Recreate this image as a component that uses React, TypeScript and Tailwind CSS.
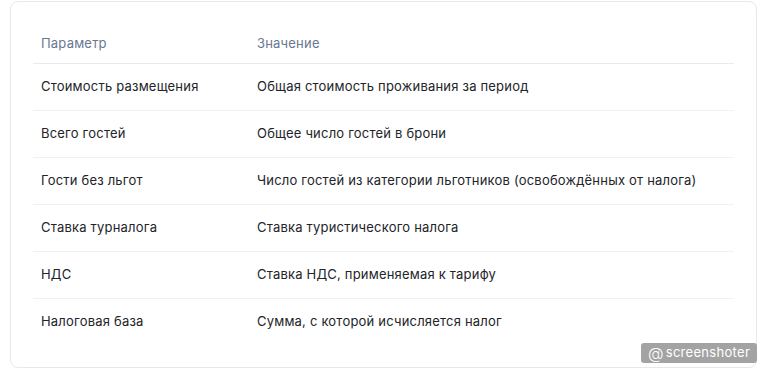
const rows: [string, string][] = [
  ["Стоимость размещения", "Общая стоимость проживания за период"],
  ["Всего гостей", "Общее число гостей в брони"],
  ["Гости без льгот", "Число гостей из категории льготников (освобождённых от налога)"],
  ["Ставка турналога", "Ставка туристического налога"],
  ["НДС", "Ставка НДС, применяемая к тарифу"],
  ["Налоговая база", "Сумма, с которой исчисляется налог"],
];

export default function App() {
  return (
    <div className="w-[763px] h-[370px] bg-white pt-px pl-[10px] relative" style={{ fontFamily: "Inter, 'Noto Sans', sans-serif" }}>
      <div className="w-[747px] h-[367px] border border-[#e5e8ee] rounded-lg px-[22px] pt-[22px] bg-white">
        <table className="w-full border-collapse text-[13px] tracking-[0.2px]">
          <thead>
            <tr className="border-b border-[#e6ebf2]">
              <th className="w-[216px] h-[39px] px-2 text-left font-normal text-[#687891]">Параметр</th>
              <th className="h-[39px] px-2 text-left font-normal text-[#687891]">Значение</th>
            </tr>
          </thead>
          <tbody>
            {rows.map(([k, v], i) => (
              <tr key={k} className={i < rows.length - 1 ? "border-b border-[#eef1f6]" : ""}>
                <td className="h-[47px] px-2 text-[#222428]">{k}</td>
                <td className="h-[47px] px-2 text-[#222428]">{v}</td>
              </tr>
            ))}
          </tbody>
        </table>
      </div>
      <div className="absolute left-[641px] top-[343px] w-[116px] h-[20px] rounded-[3px] bg-[#a3a3a3] text-white text-[13px] tracking-[0.3px] flex items-center justify-center gap-[2px]">
        <span className="text-[16px] leading-none font-light">@</span>
        <span>screenshoter</span>
      </div>
    </div>
  );
}
